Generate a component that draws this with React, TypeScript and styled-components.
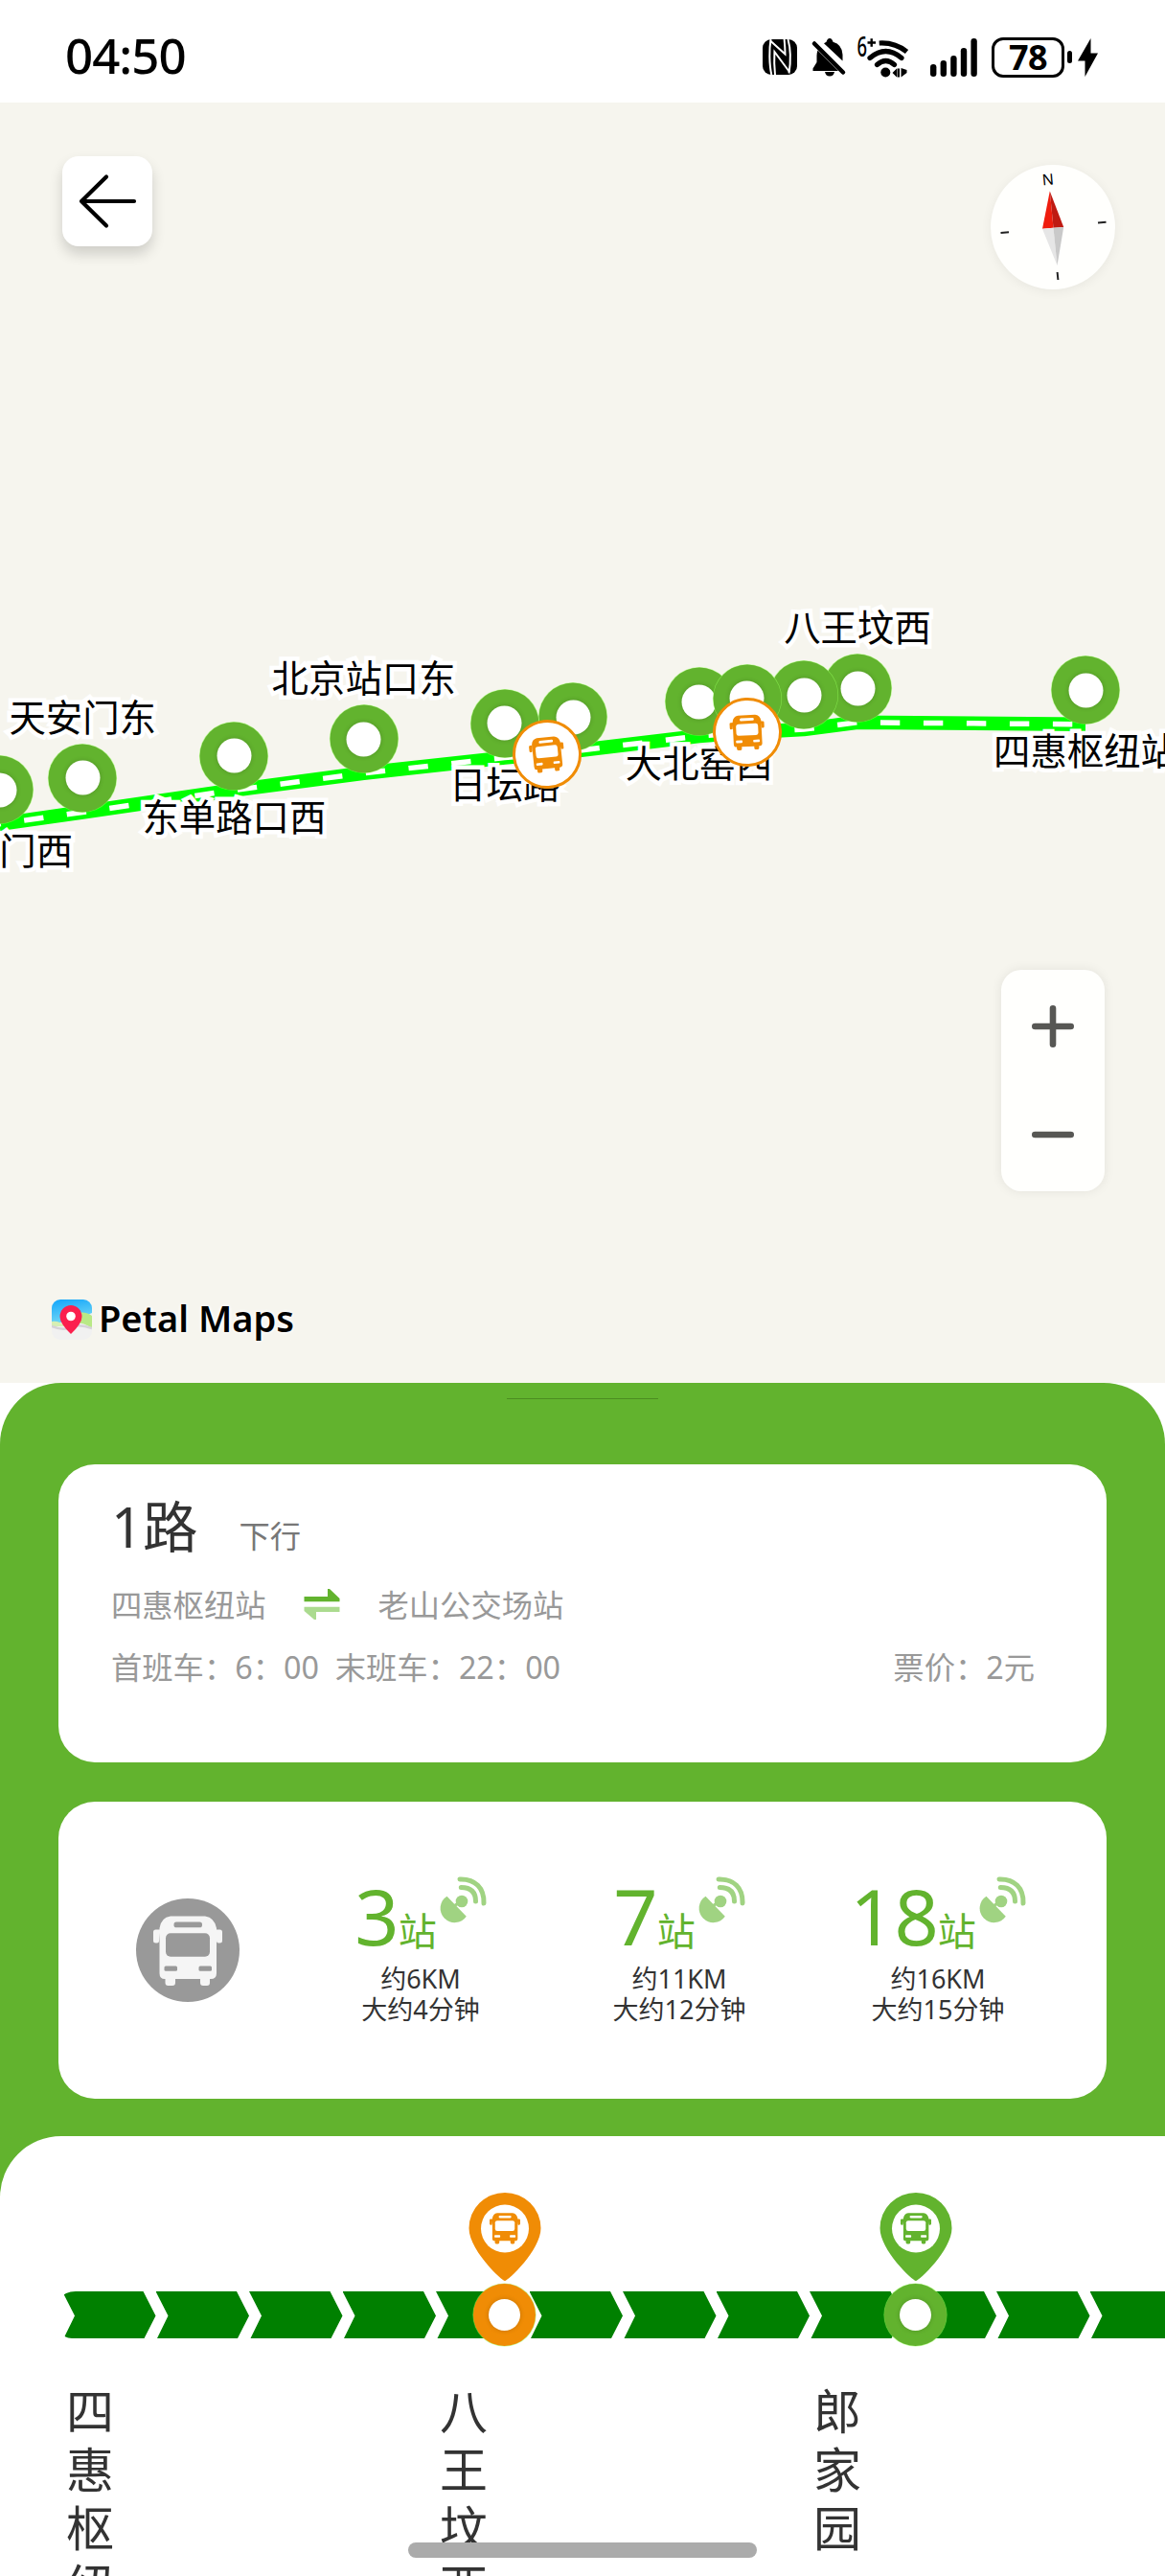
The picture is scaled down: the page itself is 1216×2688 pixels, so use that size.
import React from 'react';
import styled, { createGlobalStyle } from 'styled-components';

const GREEN = '#62b32e';
const ORANGE = '#f08c05';

const GlobalStyle = createGlobalStyle`
  *, *::before, *::after { box-sizing: border-box; }
  body {
    margin: 0;
    background: #fff;
    font-family: 'Noto Sans', 'Noto Sans CJK SC', sans-serif;
    color: #333;
  }
  svg { display: block; flex: none; overflow: visible; }
`;

const Screen = styled.div`
  position: relative;
  display: flex;
  flex-direction: column;
  width: 1216px;
  height: 2688px;
  overflow: hidden;
  background: #fff;
`;

/* ---------- status bar ---------- */

const StatusBar = styled.header`
  display: flex;
  flex: none;
  align-items: center;
  justify-content: space-between;
  height: 107px;
  padding: 12px 70px 0 68px;
  color: #000;
`;

const Clock = styled.span`
  margin-bottom: 6px;
  font-size: 51px;
  line-height: 60px;
  font-weight: 500;
  letter-spacing: -1px;
`;

const StatusIcons = styled.div`
  display: flex;
  align-items: center;
`;

const Gap = styled.i<{ $w: number }>`
  width: ${(p) => p.$w}px;
`;

const Battery = styled.div`
  display: flex;
  align-items: center;
  justify-content: center;
  width: 76px;
  height: 42px;
  border: 3.5px solid #000;
  border-radius: 12px;
  font-size: 36px;
  line-height: 36px;
  font-weight: 700;
  letter-spacing: -0.5px;
`;

const BatteryNub = styled.i`
  width: 5px;
  height: 13px;
  margin: 0 6px 0 3px;
  border-radius: 3px;
  background: #000;
`;

/* ---------- map ---------- */

const MapArea = styled.section`
  position: relative;
  flex: none;
  height: 1336px;
  overflow: hidden;
  background: #f6f5ee;
`;

const RouteLayer = styled.svg`
  position: absolute;
  inset: 0;
`;

const MapPin = styled.div<{ $x: number; $y: number }>`
  position: absolute;
  left: ${(p) => p.$x}px;
  top: ${(p) => p.$y}px;
  transform: translate(-50%, -50%);
`;

const PinLabel = styled.span`
  display: block;
  font-size: 38.4px;
  line-height: 44px;
  white-space: nowrap;
  color: #000;
  -webkit-text-stroke: 9px #fff;
  paint-order: stroke fill;
  stroke-linejoin: round;
`;

const StopRing = styled.i<{ $size: number; $hole: number; $color: string }>`
  display: grid;
  place-items: center;
  width: ${(p) => p.$size}px;
  height: ${(p) => p.$size}px;
  border-radius: 50%;
  background: ${(p) => p.$color};
  box-shadow: 0 0 0 0.6px rgba(150, 255, 90, 0.6);

  &::after {
    content: '';
    width: ${(p) => p.$hole}px;
    height: ${(p) => p.$hole}px;
    border-radius: 50%;
    background: #fff;
    box-shadow: 0 0 5px rgba(0, 0, 0, 0.18);
  }
`;

const BusBadge = styled.div<{ $tilt: number }>`
  display: grid;
  place-items: center;
  width: 72px;
  height: 72px;
  border: 3px solid ${ORANGE};
  border-radius: 50%;
  background: #fff;
  transform: rotate(${(p) => p.$tilt}deg);
`;

const BackButton = styled.button`
  position: absolute;
  left: 65px;
  top: 56px;
  display: grid;
  place-items: center;
  width: 94px;
  height: 94px;
  padding: 0;
  border: 0;
  border-radius: 17px;
  background: #fff;
  box-shadow: 0 8px 14px rgba(0, 0, 0, 0.16);
`;

const Compass = styled.div`
  position: absolute;
  left: 1034px;
  top: 65px;
  width: 130px;
  height: 130px;
  border-radius: 50%;
  background: #fffffd;
  box-shadow: 0 2px 12px rgba(0, 0, 0, 0.06);
`;

const ZoomControl = styled.div`
  position: absolute;
  left: 1045px;
  top: 905px;
  display: flex;
  flex-direction: column;
  width: 108px;
  height: 231px;
  padding: 3px 0;
  border-radius: 21px;
  background: #fffffd;
  box-shadow: 0 0 12px rgba(0, 0, 0, 0.08);
`;

const ZoomButton = styled.button`
  display: grid;
  place-items: center;
  flex: 1;
  padding: 0;
  border: 0;
  background: none;
`;

const MapBrand = styled.div`
  position: absolute;
  left: 54px;
  top: 1243px;
  display: flex;
  align-items: center;
  gap: 7px;
  font-size: 38px;
  line-height: 56px;
  font-weight: 600;
  letter-spacing: 0;
  color: #000;
  text-shadow: 0 0 4px #fff, 0 0 4px #fff;
`;

const BrandName = styled.span`
  margin-top: -3px;
`;

/* ---------- bottom sheet ---------- */

const Sheet = styled.main`
  display: flex;
  flex-direction: column;
  align-items: center;
  flex: none;
  height: 1245px;
  border-radius: 64px 64px 0 0;
  background: ${GREEN};
`;

const DragHandle = styled.i`
  flex: none;
  width: 158px;
  height: 1px;
  margin: 16px 0 68px;
  background: #4b8d20;
`;

const Card = styled.section`
  flex: none;
  width: 1094px;
  border-radius: 38px;
  background: #fff;
`;

const RouteCard = styled(Card)`
  display: flex;
  flex-direction: column;
  height: 311px;
  padding: 25px 75px 0 55px;
`;

const RouteTitle = styled.div`
  display: flex;
  align-items: baseline;
  gap: 43px;
  height: 80px;
  line-height: 80px;
`;

const RouteName = styled.h1`
  margin: 0;
  font-size: 57.5px;
  font-weight: 400;
  line-height: 80px;
  color: #333;
`;

const Direction = styled.span`
  font-size: 32.3px;
  color: #777;
`;

const InfoLine = styled.div<{ $top: number }>`
  display: flex;
  align-items: center;
  height: 48px;
  margin-top: ${(p) => p.$top}px;
  font-size: 32.3px;
  line-height: 48px;
  white-space: pre;
  color: #999;
`;

const SwapSlot = styled.div`
  padding: 0 40px 0 39px;
`;

const Fare = styled.span`
  margin-left: auto;
`;

const ArrivalCard = styled(Card)`
  display: flex;
  align-items: center;
  height: 310px;
  margin-top: 41px;
  padding-left: 81px;
`;

const LineBadge = styled.div`
  display: grid;
  place-items: center;
  width: 108px;
  height: 108px;
  margin-right: 54px;
  border-radius: 50%;
  background: #999;
`;

const Arrival = styled.div`
  display: flex;
  flex-direction: column;
  align-items: center;
  width: 270px;
  padding-bottom: 2px;
  font-size: 27px;
  line-height: 31.6px;
  color: #333;
`;

const StopsLeft = styled.div`
  display: flex;
  align-items: baseline;
  height: 86px;
  margin-bottom: 7px;
  line-height: 86px;
  color: ${GREEN};
`;

const StopCount = styled.span`
  font-size: 81px;
`;

const StopUnit = styled.span`
  margin: 0 4px 0 -1px;
  padding-bottom: 2px;
  font-size: 40px;
`;

const SignalSlot = styled.div`
  align-self: flex-start;
  padding-top: 2px;
`;

const LinePanel = styled.section`
  flex: 1;
  width: 100%;
  margin-top: 39px;
  border-radius: 64px 0 0 0;
  background: #fff;
  overflow: hidden;
`;

const Track = styled.div`
  position: relative;
  display: flex;
  height: 49px;
  margin: 162px 0 0 65px;
`;

const Segment = styled.i<{ $first?: boolean }>`
  flex: none;
  width: 98.4px;
  height: 49px;
  margin-right: -0.9px;
  border-radius: ${(p) => (p.$first ? '14px 0 0 10px / 7px 0 0 6px' : '0')};
  background: #008000;
  clip-path: polygon(0 0, 84.5px 0, 97.5px 25.5px, 85.5px 49px, 1.5px 49px, 13px 25.5px);
`;

const VehicleMarker = styled.div<{ $x: number }>`
  position: absolute;
  left: ${(p) => p.$x}px;
  top: -103px;
  display: flex;
  flex-direction: column;
  align-items: center;
  gap: 3px;
  width: 76px;
`;

const StopNames = styled.div`
  display: flex;
  margin: 46px 0 0 69px;
`;

const StopName = styled.div`
  flex: none;
  width: 50px;
  margin-right: 340px;
  font-size: 50px;
  line-height: 61px;
  word-break: break-all;
  color: #333;
`;

const HomeBar = styled.i`
  position: absolute;
  left: 426px;
  bottom: 19px;
  width: 364px;
  height: 16.5px;
  border-radius: 9px;
  background: #ababab;
`;

/* ---------- drawings ---------- */

const BusGlyph = ({ width, color, hole, x, y }: { width: number; color: string; hole: string; x?: number; y?: number }) => (
  <svg x={x} y={y} width={width} height={(width * 73) / 72} viewBox="0 0 72 73">
    <g fill={color}>
      <path d="M18 0.500H54Q64 2 66 13V60Q66 66 60 66H59V70Q59 73 56 73H52Q49 73 49 70V66H23V70Q23 73 20 73H15.500Q12.500 73 12.500 70V66H12Q6.500 66 6.500 60V13Q8 2 18 0.500Z" />
      <path d="M7 14.500H2.500Q0 14.500 0 17V26Q0 28.500 2.500 28.500H4Q6 28.500 6 26.500L7 18Z" />
      <path d="M65 14.500H69.500Q72 14.500 72 17V26Q72 28.500 69.500 28.500H68Q66 28.500 66 26.500L65 18Z" />
    </g>
    <g fill={hole}>
      <rect x="21.500" y="6.500" width="29.500" height="5.800" rx="2.600" />
      <rect x="13" y="18.300" width="46" height="24.500" rx="5" />
      <rect x="11.500" y="52.500" width="13.500" height="5.200" rx="1.500" />
      <rect x="47.500" y="52.500" width="13.500" height="5.200" rx="1.500" />
    </g>
  </svg>
);

const NfcIcon = () => (
  <svg width="36" height="37" viewBox="0 0 36 37">
    <rect width="36" height="37" rx="9" />
    <g fill="none" stroke="#fff" strokeWidth="2">
      <path d="M8.500 0C6.800 10 6.800 26 9.300 37" />
      <path d="M8 1.500L23.500 15.500C23.500 9 23 4 22.600 0" />
      <path d="M13 37C12.200 29 12 20 12.400 13L28 34" />
      <path d="M26.500 0C29.300 10 29.300 24 27.500 35.500" />
    </g>
  </svg>
);

const BellOffIcon = () => (
  <svg width="34" height="40" viewBox="0 0 34 40">
    <path d="M5.500 12.500L27 34H0.500V31.500L4.500 25V18Q4.500 15 5.500 12.500Z" />
    <path d="M12 5.300L14.500 3.800Q15.500 0 18 0T21.500 3.800Q31 6.500 31.500 17V23.500Z" />
    <path d="M2 5.500L32 35.500" stroke="#000" strokeWidth="4.500" strokeLinecap="round" />
    <path d="M13 35H23Q22 39.500 18 39.500T13 35Z" />
  </svg>
);

const WifiIcon = () => (
  <svg width="54" height="43" viewBox="0 0 54 43">
    <text x="-0.500" y="20.500" fontSize="28" fontWeight="500" textLength="10.500" lengthAdjust="spacingAndGlyphs">6</text>
    <g fill="none" stroke="#000">
      <path d="M10.500 6.500H19M14.700 2.300V10.700" strokeWidth="2.400" />
      <path d="M22.700 7Q39 6 51.500 16" strokeWidth="5.200" />
      <path d="M13 22.500Q29.500 8.500 46 22.500" strokeWidth="5.200" strokeLinecap="round" />
      <path d="M20.500 29.500Q29.500 21.500 38.500 29.500" strokeWidth="5.200" strokeLinecap="round" />
    </g>
    <circle cx="29.300" cy="37.500" r="5" />
    <path d="M36.500 38L41 33.500V42.500ZM41.500 33.500H44V42.500H41.500ZM45.500 33L51.500 35V38L45.500 42.500Z" />
  </svg>
);

const SignalIcon = () => (
  <svg width="49" height="40" viewBox="0 0 49 40">
    {[13, 17, 22, 30, 40].map((h, i) => (
      <rect key={h} x={i * 10.6} y={40 - h} width="6.400" height={h} rx="3.200" />
    ))}
  </svg>
);

const BoltIcon = () => (
  <svg width="21" height="40" viewBox="0 0 21 40">
    <path d="M13.500 0V15.500H21L7.500 40V23.500H0Z" />
  </svg>
);

const BackIcon = () => (
  <svg width="60" height="56" viewBox="0 0 60 56" fill="none" stroke="#000" strokeWidth="4.200" strokeLinecap="round" strokeLinejoin="round">
    <path d="M58 28H3M29 2.500L3 28L29 53.500" />
  </svg>
);

const CompassDial = () => (
  <svg width="130" height="130" viewBox="1034 172 130 130">
    <text x="1094" y="193" fontSize="16" textAnchor="middle" transform="rotate(-5 1094 188)">N</text>
    <path d="M1095.800 199.500L1088 238.800L1099.500 237.800Z" fill="#ef1c0d" />
    <path d="M1095.800 199.500L1110.200 237L1099.500 237.800Z" fill="#bf1a12" />
    <path d="M1088 238.800L1103.500 277L1099.500 237.800Z" fill="#e6e6e6" />
    <path d="M1110.200 237L1103.500 277L1099.500 237.800Z" fill="#c9c9c9" />
    <path d="M1044.500 243L1053 242.200M1146 232.600L1154.500 231.800M1103.600 284L1104.400 292" stroke="#222" strokeWidth="2" />
  </svg>
);

const PlusIcon = ({ minus }: { minus?: boolean }) => (
  <svg width="44" height="44" viewBox="0 0 44 44" stroke="#575754" strokeWidth="6.600" strokeLinecap="round">
    <path d={minus ? 'M3.300 22H40.700' : 'M3.300 22H40.700M22 3.300V40.700'} />
  </svg>
);

const PetalLogo = () => (
  <svg width="42" height="42" viewBox="0 0 42 42">
    <defs>
      <linearGradient id="sky" x1="0" y1="0" x2="0.300" y2="1">
        <stop offset="0" stopColor="#12a5fb" />
        <stop offset="1" stopColor="#6fd6f5" />
      </linearGradient>
      <clipPath id="tile"><rect width="42" height="42" rx="9" /></clipPath>
    </defs>
    <g clipPath="url(#tile)">
      <rect width="42" height="42" fill="#f1f1f1" />
      <path d="M0 0H42V14L20 24L0 24Z" fill="url(#sky)" />
      <path d="M26 14Q36 12 42 17V30Q34 24 24 24Z" fill="#b9e986" />
      <path d="M0 23Q8 22 14 28H0Z" fill="#d6efb4" />
      <path d="M0 28Q12 33 20 29T42 30" fill="none" stroke="#d5d2d8" strokeWidth="2.500" />
    </g>
    <path d="M20 36Q8.500 25 8.500 18A11.500 12 0 0 1 31.500 18Q31.500 25 20 36Z" fill="#fb1f4e" />
    <circle cx="20" cy="17.500" r="4.800" fill="#fff" />
  </svg>
);

const SwapIcon = () => (
  <svg width="38" height="32" viewBox="0 0 37 32">
    <path d="M0 8H24.500V0H26.500L37 10V13.300H0Z" fill={GREEN} />
    <path d="M0 18.700H37V24H12.500V32H10.500L0 23Z" fill="#abdb8f" />
  </svg>
);

const DishIcon = () => (
  <svg width="48" height="48" viewBox="0 0 48 48" fill="#a0d382">
    <path d="M6.500 20.700L26.800 41.700A14.900 14.900 0 1 1 6.500 20.700Z" />
    <path d="M14 31L22 25" stroke="#a0d382" strokeWidth="3" />
    <circle cx="22" cy="26" r="6.300" />
    <g fill="none" stroke="#a0d382" strokeWidth="5" strokeLinecap="round">
      <path d="M21.300 11.500Q36.500 11.500 36.500 26" />
      <path d="M20 3C36 2.500 45.500 12 45 28" />
    </g>
  </svg>
);

const VehiclePin = ({ color }: { color: string }) => (
  <svg width="76" height="92" viewBox="0 0 76 92">
    <path d="M38 92C35 92 0.500 60 0.500 37A37.500 37 0 0 1 75.500 37C75.500 60 41 92 38 92Z" fill={color} />
    <circle cx="38" cy="37.500" r="25" fill="#fff" />
    <BusGlyph x={22} y={21} width={32} color={color} hole="#fff" />
  </svg>
);

/* ---------- data ---------- */

type Stop = { x: number; y: number; name?: string; side?: 'above' | 'below' };

const stops: Stop[] = [
  { x: 1133, y: 613, name: '四惠枢纽站', side: 'below' },
  { x: 895, y: 611, name: '八王坟西', side: 'above' },
  { x: 839, y: 618.3 },
  { x: 729.6, y: 625.3, name: '大北窑西', side: 'below' },
  { x: 779.5, y: 621.5 },
  { x: 526.7, y: 647.8, name: '日坛路', side: 'below' },
  { x: 598.3, y: 641 },
  { x: 379.6, y: 664, name: '北京站口东', side: 'above' },
  { x: 244.4, y: 681.7, name: '东单路口西', side: 'below' },
  { x: 86.2, y: 704.7, name: '天安门东', side: 'above' },
  { x: -0.7, y: 717, name: '天安门西', side: 'below' },
];

const routePoints = [...stops]
  .sort((a, b) => b.x - a.x)
  .map((s) => `${s.x},${s.y + 35.8}`)
  .join(' ');

const buses = [
  { x: 571.4, y: 679.7, tilt: -6 },
  { x: 779.5, y: 657.3, tilt: -3 },
];

const arrivals = [
  { stops: 3, distance: '约6KM', time: '大约4分钟' },
  { stops: 7, distance: '约11KM', time: '大约12分钟' },
  { stops: 18, distance: '约16KM', time: '大约15分钟' },
];

const lineStops = ['四惠枢纽站', '八王坟西', '郎家园'];

const vehicles = [
  { x: 423.5, color: ORANGE },
  { x: 852.5, color: GREEN },
];

export default function App() {
  return (
    <Screen>
      <GlobalStyle />

      <StatusBar>
        <Clock>04:50</Clock>
        <StatusIcons>
          <NfcIcon />
          <Gap $w={16} />
          <BellOffIcon />
          <Gap $w={13} />
          <WifiIcon />
          <Gap $w={22} />
          <SignalIcon />
          <Gap $w={15} />
          <Battery>78</Battery>
          <BatteryNub />
          <BoltIcon />
        </StatusIcons>
      </StatusBar>

      <MapArea>
        <RouteLayer width="1216" height="1336" fill="none">
          <polyline points={routePoints} stroke="#00ff00" strokeWidth="14.500" strokeLinejoin="round" />
          <polyline points={routePoints} stroke="#fff" strokeWidth="5.500" strokeDasharray="20.400 24.600" strokeDashoffset="-13.700" />
        </RouteLayer>

        {stops.map((s) =>
          s.name ? (
            <MapPin key={s.name} $x={s.x} $y={s.y + (s.side === 'above' ? -64 : 63.4)}>
              <PinLabel>{s.name}</PinLabel>
            </MapPin>
          ) : null,
        )}
        {stops.map((s) => (
          <MapPin key={s.x} $x={s.x} $y={s.y}>
            <StopRing $size={71} $hole={36} $color={GREEN} />
          </MapPin>
        ))}
        {buses.map((b) => (
          <MapPin key={b.x} $x={b.x} $y={b.y}>
            <BusBadge $tilt={b.tilt}>
              <BusGlyph width={36} color={ORANGE} hole="#fff" />
            </BusBadge>
          </MapPin>
        ))}

        <BackButton aria-label="返回">
          <BackIcon />
        </BackButton>
        <Compass>
          <CompassDial />
        </Compass>
        <ZoomControl>
          <ZoomButton>
            <PlusIcon />
          </ZoomButton>
          <ZoomButton>
            <PlusIcon minus />
          </ZoomButton>
        </ZoomControl>
        <MapBrand>
          <PetalLogo />
          <BrandName>Petal Maps</BrandName>
        </MapBrand>
      </MapArea>

      <Sheet>
        <DragHandle />
        <RouteCard>
          <RouteTitle>
            <RouteName>1路</RouteName>
            <Direction>下行</Direction>
          </RouteTitle>
          <InfoLine $top={17}>
            四惠枢纽站
            <SwapSlot>
              <SwapIcon />
            </SwapSlot>
            老山公交场站
          </InfoLine>
          <InfoLine $top={17}>
            <span>{'首班车：6：00  末班车：22：00'}</span>
            <Fare>票价：2元</Fare>
          </InfoLine>
        </RouteCard>

        <ArrivalCard>
          <LineBadge>
            <BusGlyph width={72} color="#f5f5f5" hole="#999" />
          </LineBadge>
          {arrivals.map((a) => (
            <Arrival key={a.stops}>
              <StopsLeft>
                <StopCount>{a.stops}</StopCount>
                <StopUnit>站</StopUnit>
                <SignalSlot>
                  <DishIcon />
                </SignalSlot>
              </StopsLeft>
              <span>{a.distance}</span>
              <span>{a.time}</span>
            </Arrival>
          ))}
        </ArrivalCard>

        <LinePanel>
          <Track>
            {Array.from({ length: 12 }, (_, i) => (
              <Segment key={i} $first={i === 0} />
            ))}
            {vehicles.map((v) => (
              <VehicleMarker key={v.x} $x={v.x}>
                <VehiclePin color={v.color} />
                <StopRing $size={65} $hole={33} $color={v.color} />
              </VehicleMarker>
            ))}
          </Track>
          <StopNames>
            {lineStops.map((name) => (
              <StopName key={name}>{name}</StopName>
            ))}
          </StopNames>
        </LinePanel>
      </Sheet>

      <HomeBar />
    </Screen>
  );
}
